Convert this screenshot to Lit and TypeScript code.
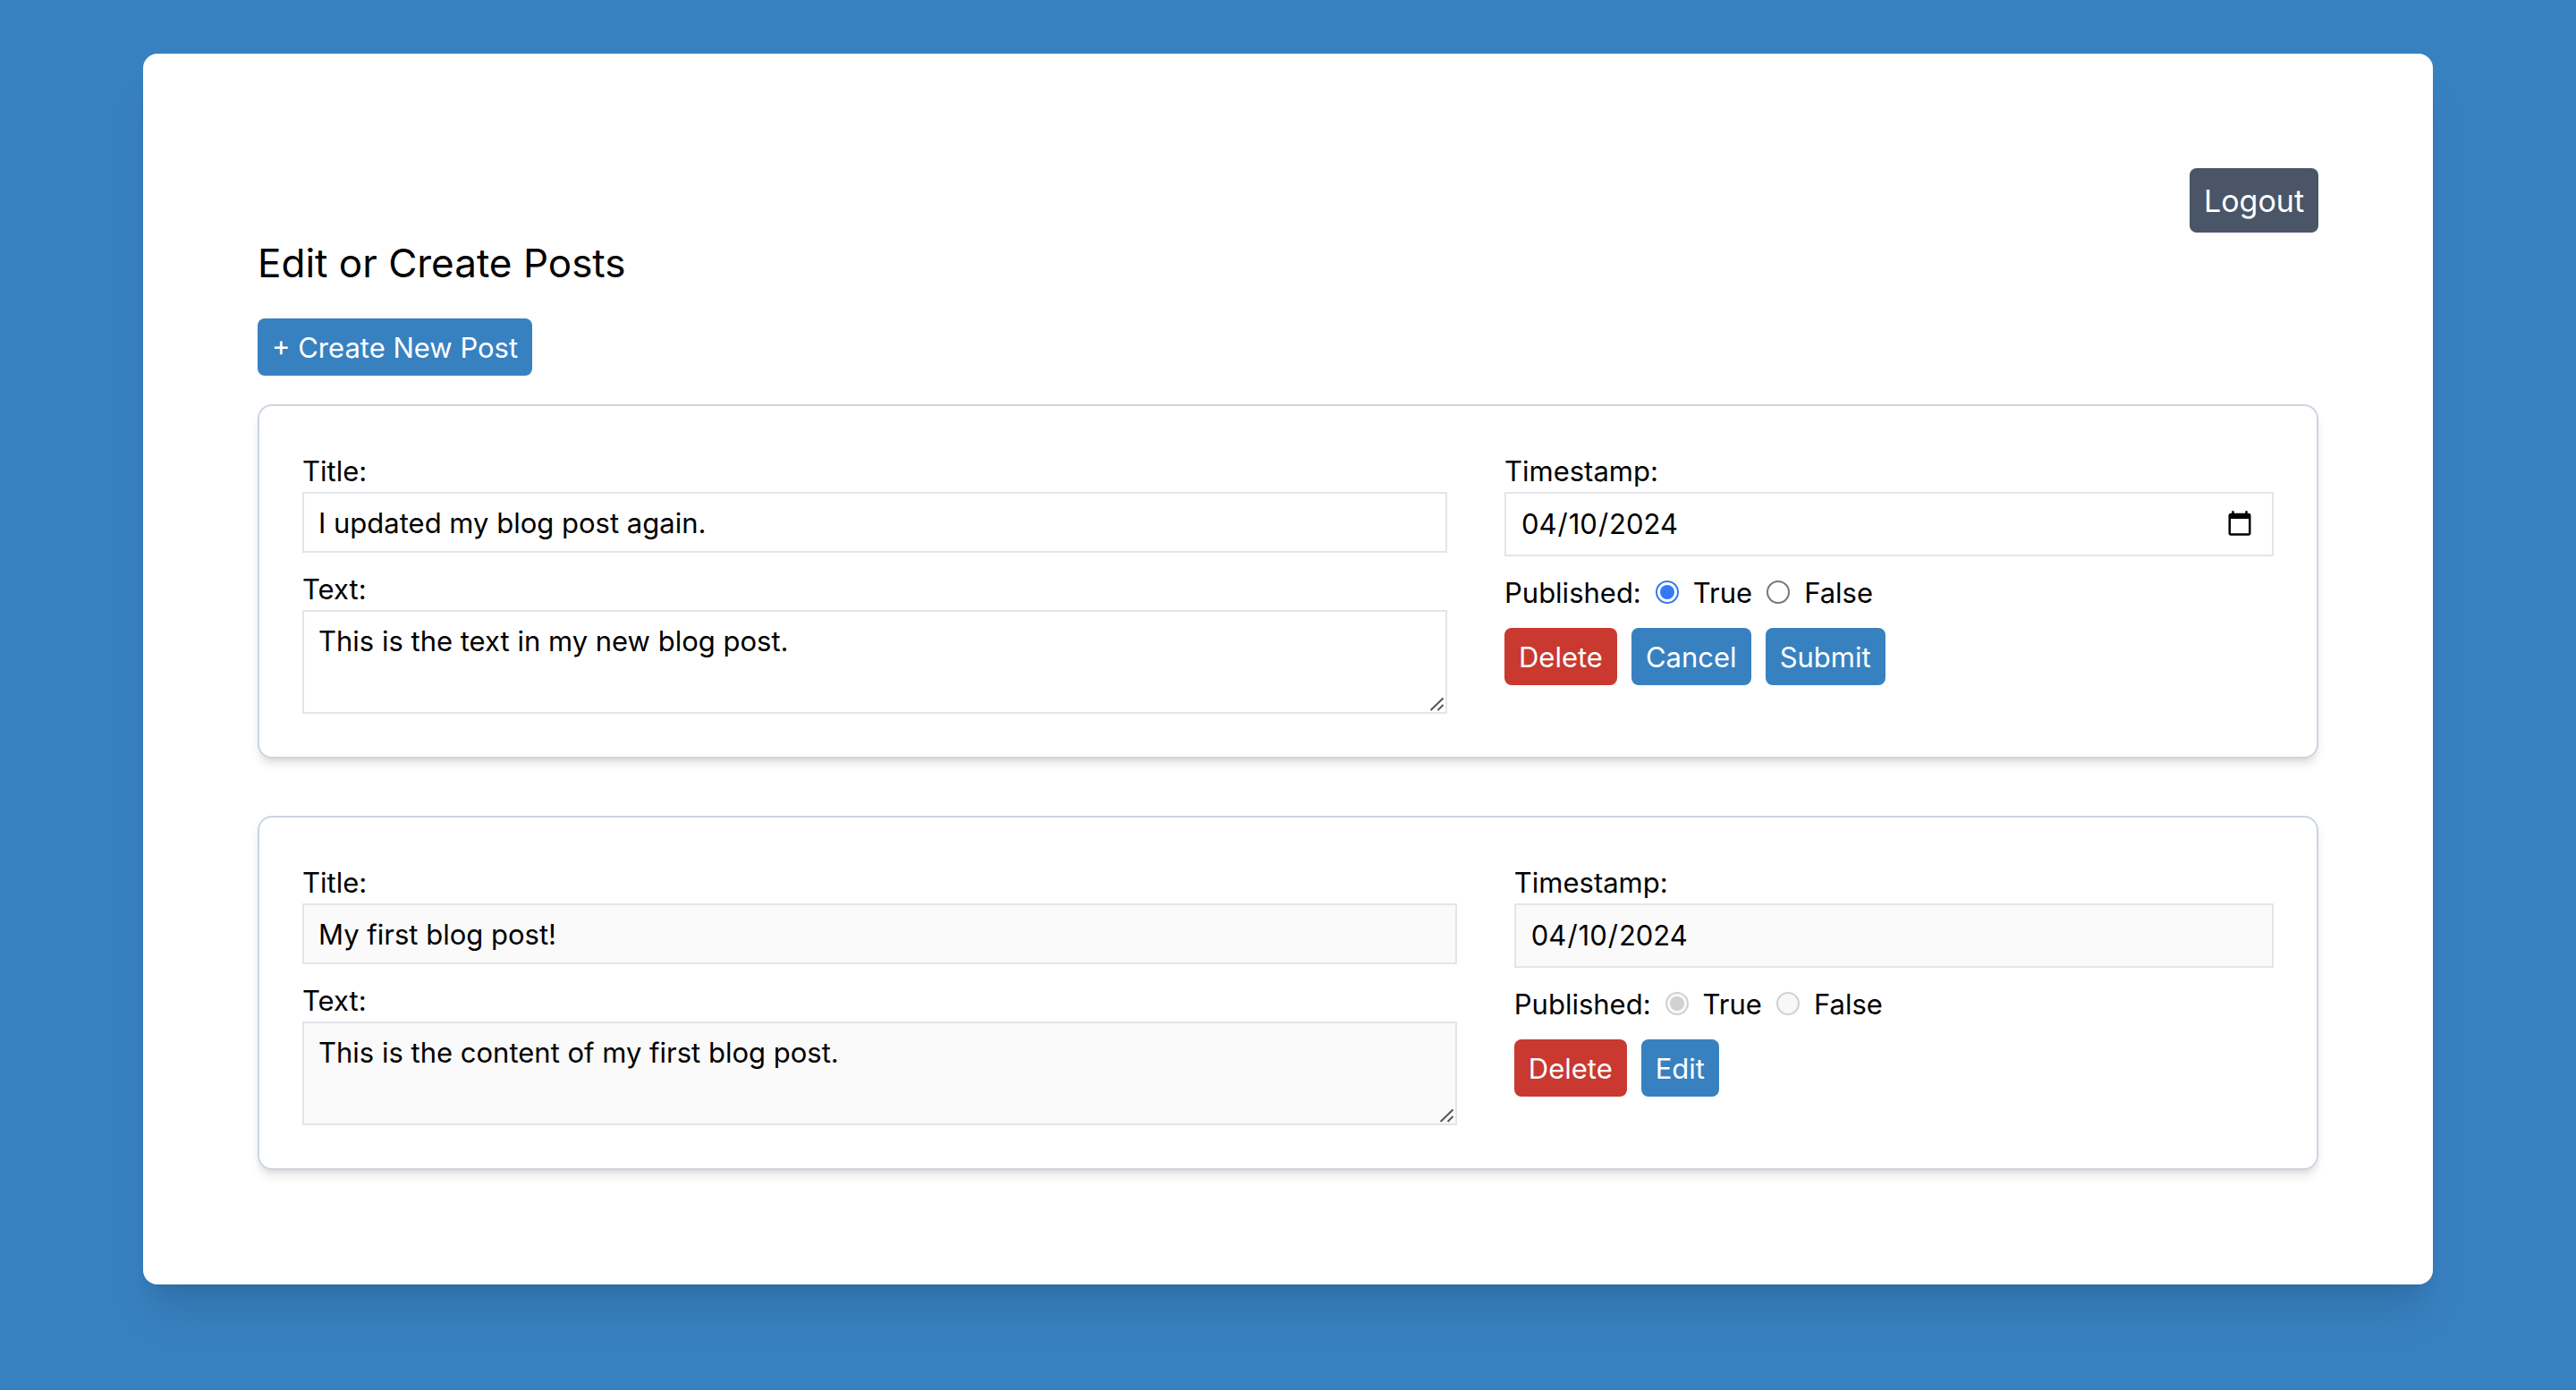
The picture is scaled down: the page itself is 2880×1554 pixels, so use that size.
import { LitElement, html, css } from "lit";
import { customElement, property, state } from "lit/decorators.js";
import { classMap } from "lit/directives/class-map.js";

interface Post {
  id: number;
  title: string;
  text: string;
  date: string;
  published: boolean;
  editing: boolean;
}

const buttonStyles = css`
  .btn {
    padding: 9px 16px 7px;
    border: 0;
    border-radius: 8px;
    background: #3881c1;
    color: #fff;
    font: inherit;
    line-height: 48px;
    cursor: pointer;
  }
  .btn.danger {
    background: #c93930;
  }
  .btn.dark {
    background: #4a5568;
    font-size: 34px;
    line-height: 56px;
  }
`;

@customElement("post-card")
export class PostCard extends LitElement {
  @property({ attribute: false }) post!: Post;

  static styles = [
    buttonStyles,
    css`
      :host {
        display: block;
      }
      .card {
        display: grid;
        grid-template-columns: 152fr 100fr;
        gap: 64px;
        padding: 48px;
        border: 2px solid #cbd5e0;
        border-radius: 16px;
        box-shadow: 0 8px 12px -2px rgba(0, 0, 0, 0.1), 0 4px 8px -4px rgba(0, 0, 0, 0.1);
      }
      .card.editing {
        grid-template-columns: 64fr 43fr;
      }
      .column {
        display: flex;
        flex-direction: column;
        gap: 16px;
        min-width: 0;
      }
      .field {
        display: flex;
        flex-direction: column;
      }
      .caption {
        padding-top: 2px;
        line-height: 46px;
      }
      .control {
        box-sizing: border-box;
        width: 100%;
        margin: 0;
        padding: 8px 16px;
        border: 2px solid #e4e5ea;
        border-radius: 0;
        background: #fff;
        color: #000;
        font: inherit;
        line-height: 48px;
        outline: none;
      }
      .control:disabled {
        background: #fafafa;
        opacity: 1;
      }
      .line {
        height: 68px;
      }
      .date {
        height: 72px;
      }
      .date::-webkit-calendar-picker-indicator {
        width: 32px;
        height: 32px;
        margin-right: 2px;
      }
      .area-wrap {
        position: relative;
        display: flex;
      }
      .area {
        height: 116px;
        padding: 9px 16px 7px;
        resize: vertical;
      }
      .area::-webkit-resizer {
        display: none;
      }
      .grip {
        position: absolute;
        right: 2px;
        bottom: 2px;
        width: 20px;
        height: 20px;
        pointer-events: none;
      }
      .choices {
        display: flex;
        align-items: center;
        gap: 16px;
      }
      .choice {
        display: flex;
        align-items: center;
        gap: 16px;
      }
      .radio {
        appearance: none;
        display: grid;
        place-content: center;
        box-sizing: border-box;
        width: 26px;
        height: 26px;
        margin: 0;
        border: 2px solid #767676;
        border-radius: 50%;
        background: #fff;
      }
      .radio:checked {
        border-color: #3478f6;
      }
      .radio:checked::before {
        content: "";
        width: 16px;
        height: 16px;
        border-radius: 50%;
        background: #3478f6;
      }
      .radio:disabled {
        border-color: #d1d1d1;
        background: #f8f8f8;
      }
      .radio:disabled:checked::before {
        background: #d1d1d1;
      }
      .actions {
        display: flex;
        gap: 16px;
      }
    `,
  ];

  private toggle(editing: boolean) {
    this.dispatchEvent(new CustomEvent("toggle-edit", { detail: { id: this.post.id, editing } }));
  }

  private remove() {
    this.dispatchEvent(new CustomEvent("remove-post", { detail: this.post.id }));
  }

  private submit(e: Event) {
    e.preventDefault();
    this.toggle(false);
  }

  render() {
    const { title, text, date, published, editing } = this.post;
    const locked = !editing;
    return html`
      <form class=${classMap({ card: true, editing })} @submit=${this.submit}>
        <div class="column">
          <div class="field">
            <label class="caption" for="title">Title:</label>
            <input class="control line" id="title" type="text" .value=${title} ?disabled=${locked} />
          </div>
          <div class="field">
            <label class="caption" for="text">Text:</label>
            <div class="area-wrap">
              <textarea class="control area" id="text" rows="2" .value=${text} ?disabled=${locked}></textarea>
              <svg class="grip" viewBox="0 0 20 20" fill="none" stroke="#555" stroke-width="2" aria-hidden="true">
                <path d="M3.5 18 17.5 4.5M11.5 18l6-6" />
              </svg>
            </div>
          </div>
        </div>
        <div class="column">
          <div class="field">
            <label class="caption" for="date">Timestamp:</label>
            <input class="control date" id="date" type="date" .value=${date} ?disabled=${locked} />
          </div>
          <div class="choices" role="radiogroup" aria-labelledby="published">
            <span class="caption" id="published">Published:</span>
            <label class="choice">
              <input class="radio" type="radio" name="published" .checked=${published} ?disabled=${locked} />
              <span class="caption">True</span>
            </label>
            <label class="choice">
              <input class="radio" type="radio" name="published" .checked=${!published} ?disabled=${locked} />
              <span class="caption">False</span>
            </label>
          </div>
          <div class="actions">
            <button class="btn danger" type="button" @click=${this.remove}>Delete</button>
            ${editing
              ? html`<button class="btn" type="button" @click=${() => this.toggle(false)}>Cancel</button>
                  <button class="btn" type="submit">Submit</button>`
              : html`<button class="btn" type="button" @click=${() => this.toggle(true)}>Edit</button>`}
          </div>
        </div>
      </form>
    `;
  }
}

@customElement("app-root")
export class AppRoot extends LitElement {
  @state() private posts: Post[] = [
    {
      id: 2,
      title: "I updated my blog post again.",
      text: "This is the text in my new blog post.",
      date: "2024-04-10",
      published: true,
      editing: true,
    },
    {
      id: 1,
      title: "My first blog post!",
      text: "This is the content of my first blog post.",
      date: "2024-04-10",
      published: true,
      editing: false,
    },
  ];

  static styles = [
    buttonStyles,
    css`
      :host {
        display: block;
        box-sizing: border-box;
        min-height: 100vh;
        padding: 60px 160px;
        background: #3881c1;
        color: #000;
        font-family: Inter, "Liberation Sans", sans-serif;
        font-size: 31px;
        line-height: 48px;
      }
      .panel {
        display: flex;
        flex-direction: column;
        padding: 128px;
        border-radius: 16px;
        background: #fff;
        box-shadow: 0 40px 50px -10px rgba(0, 0, 0, 0.1), 0 16px 20px -12px rgba(0, 0, 0, 0.1);
      }
      .top {
        display: flex;
        justify-content: flex-end;
      }
      .heading {
        margin: 2px 0 30px;
        font-size: 44px;
        font-weight: 400;
        line-height: 64px;
      }
      .create {
        align-self: flex-start;
        margin-bottom: 32px;
      }
      .posts {
        display: flex;
        flex-direction: column;
        gap: 64px;
      }
    `,
  ];

  private create() {
    const id = Math.max(0, ...this.posts.map((p) => p.id)) + 1;
    this.posts = [{ id, title: "", text: "", date: "", published: false, editing: true }, ...this.posts];
  }

  private setEditing(e: CustomEvent<{ id: number; editing: boolean }>) {
    const { id, editing } = e.detail;
    this.posts = this.posts.map((p) => (p.id === id ? { ...p, editing } : p));
  }

  private removePost(e: CustomEvent<number>) {
    this.posts = this.posts.filter((p) => p.id !== e.detail);
  }

  render() {
    return html`
      <main class="panel">
        <div class="top"><button class="btn dark" type="button">Logout</button></div>
        <h1 class="heading">Edit or Create Posts</h1>
        <button class="btn create" type="button" @click=${this.create}>+ Create New Post</button>
        <div class="posts">
          ${this.posts.map(
            (post) => html`<post-card
              .post=${post}
              @toggle-edit=${this.setEditing}
              @remove-post=${this.removePost}
            ></post-card>`
          )}
        </div>
      </main>
    `;
  }
}
